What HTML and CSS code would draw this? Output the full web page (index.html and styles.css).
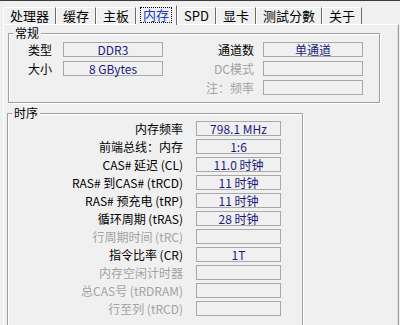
FILE: index.html
```html
<!DOCTYPE html>
<html lang="zh-CN">

<head>
    <meta charset="UTF-8">
    <meta name="viewport" content="width=device-width, initial-scale=1.0">
    <title>内存</title>

    <link rel="stylesheet" href="styles.css">
</head>

<body>
    <div class="window">
        <ul class="tabs">
            <li>处理器</li>
            <li>缓存</li>
            <li>主板</li>
            <li class="active"><span>内存</span></li>
            <li>SPD</li>
            <li>显卡</li>
            <li>测試分數</li>
            <li>关于</li>
        </ul>

        <div class="panel">
            <fieldset class="group general">
                <legend>常规</legend>
                <div class="general-grid">
                    <span class="label">类型</span>
                    <span class="field">DDR3</span>
                    <span class="label">通道数</span>
                    <span class="field">单通道</span>

                    <span class="label">大小</span>
                    <span class="field">8 GBytes</span>
                    <span class="label off">DC模式</span>
                    <span class="field"></span>

                    <span class="label"></span>
                    <span></span>
                    <span class="label off">注：频率</span>
                    <span class="field"></span>
                </div>
            </fieldset>

            <fieldset class="group timings">
                <legend>时序</legend>
                <div class="timing-grid">
                    <span class="label">内存频率</span>
                    <span class="field">798.1 MHz</span>
                    <span class="label">前端总线：内存</span>
                    <span class="field">1:6</span>
                    <span class="label">CAS# 延迟 (CL)</span>
                    <span class="field">11.0 时钟</span>
                    <span class="label">RAS# 到CAS# (tRCD)</span>
                    <span class="field">11 时钟</span>
                    <span class="label">RAS# 预充电 (tRP)</span>
                    <span class="field">11 时钟</span>
                    <span class="label">循环周期 (tRAS)</span>
                    <span class="field">28 时钟</span>
                    <span class="label off">行周期时间 (tRC)</span>
                    <span class="field"></span>
                    <span class="label">指令比率 (CR)</span>
                    <span class="field">1T</span>
                    <span class="label off">内存空闲计时器</span>
                    <span class="field"></span>
                    <span class="label off">总CAS号 (tRDRAM)</span>
                    <span class="field"></span>
                    <span class="label off">行至列 (tRCD)</span>
                    <span class="field"></span>
                </div>
            </fieldset>
        </div>
    </div>
</body>

</html>
```

FILE: styles.css
```css
* {
    box-sizing: border-box;
}

body {
    margin: 0;
    height: 325px;
    overflow: hidden;
    background-color: #f0f0f0;
    border-top: 1px solid #3c3c3c;
    font-family: "Noto Sans CJK SC", sans-serif;
    font-size: 12px;
    color: #000;
}

.window {
    display: flex;
    flex-direction: column;
    height: 324px;
    padding: 6px 1px 0 3px;
}

/* tab strip */
.tabs {
    display: flex;
    align-items: flex-end;
    height: 17px;
    margin: 0;
    padding: 0;
    list-style: none;
}

.tabs li {
    height: 17px;
    padding: 0 6px;
    border-top: 1px solid #fff;
    border-left: 1px solid #fff;
    border-right: 1px solid #6b6b6b;
    font-size: 13px;
    line-height: 16px;
    white-space: nowrap;
}

.tabs li.active {
    position: relative;
    z-index: 1;
    height: 20px;
    margin-bottom: -1px;
    padding: 1px 4px 0 3px;
    background-color: #f0f0f0;
    color: #1f3bc6;
}

.tabs li.active span {
    display: block;
    padding: 0 2px;
    border: 1px dotted #000;
    line-height: 14px;
}

/* tab page */
.panel {
    flex: 1;
    padding: 0;
    border-top: 1px solid #fff;
    border-left: 1px solid #fff;
    border-right: 1px solid #9a9a9a;
    box-shadow: inset -1px 0 0 #e2e2e2;
}

.group {
    margin: 0;
    padding: 0;
    border: 1px solid #a0a0a0;
    box-shadow: inset 1px 1px 0 #fff, 1px 1px 0 #fff;
}

.group legend {
    margin-left: 4px;
    padding: 0 2px;
    background-color: #f0f0f0;
    line-height: 14px;
}

.general {
    width: 372px;
    margin: 1px 0 0 4px;
    padding: 2px 16px 7px 0;
}

.timings {
    width: 296px;
    margin: 3px 0 0 3px;
    padding: 1px 21px 20px 0;
}

.general-grid {
    display: grid;
    grid-template-columns: 54px 100px 1fr 100px;
    grid-auto-rows: 15px;
    row-gap: 4px;
}

.general-grid .label:nth-child(4n+1) {
    padding-right: 11px;
}

.general-grid .label:nth-child(4n+3) {
    padding-right: 9px;
}

.timing-grid {
    display: grid;
    grid-template-columns: 1fr 85px;
    grid-auto-rows: 15px;
    row-gap: 3px;
}

.timing-grid .label {
    padding-right: 13px;
}

.label {
    text-align: right;
    line-height: 15px;
    white-space: nowrap;
}

.label.off {
    color: #a3a3a3;
}

.field {
    border: 1px solid #a8a8a8;
    text-align: center;
    line-height: 13px;
    color: #1a1a7e;
    white-space: nowrap;
}
```
